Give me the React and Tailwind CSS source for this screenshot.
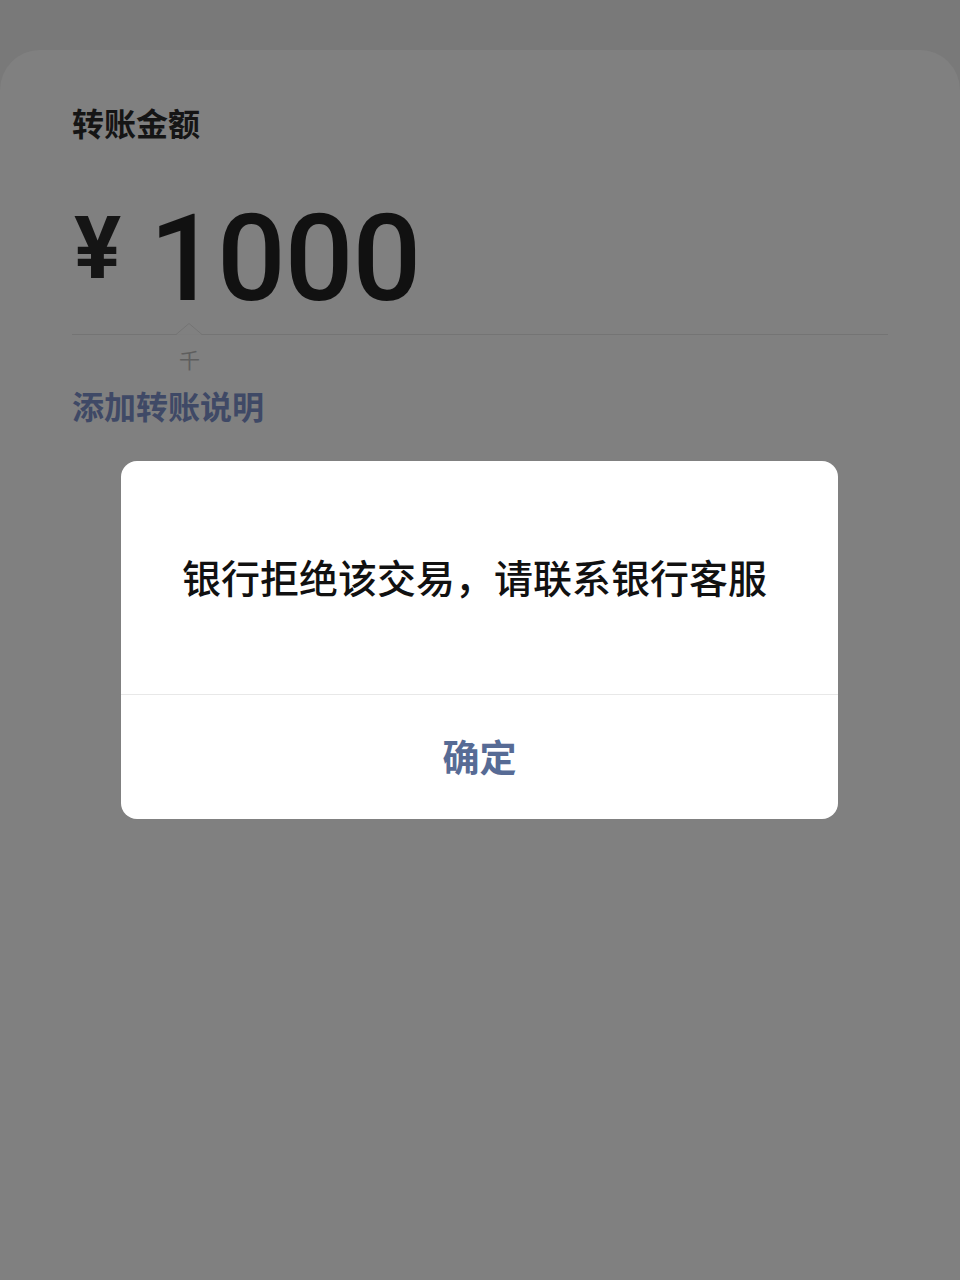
import React from "react";

export default function App() {
  return (
    <div
      className="w-[960px] h-[1280px] bg-[#797979] pt-[50px] overflow-hidden relative"
      style={{ fontFamily: '"Noto Sans CJK SC", "Noto Sans", sans-serif' }}
    >
      <div className="h-full bg-[#808080] rounded-t-[40px] px-[72px] pt-[52px]">
        <div className="text-[32px] leading-[40px] font-semibold text-[#151515]">转账金额</div>
        <div className="flex items-end mt-[66px] h-[112px]">
          <span
            className="text-[88px] leading-none font-bold text-[#151515] mb-[28px] ml-[2px]"
            style={{ fontFamily: 'Roboto, sans-serif' }}
          >
            ¥
          </span>
          <span
            className="ml-[28px] text-[121px] leading-none font-medium text-[#111] tracking-[-1px]"
            style={{ fontFamily: 'Roboto, sans-serif' }}
          >
            1000
          </span>
        </div>
        <div className="relative mt-[14px] h-px bg-[#747474] w-[816px]">
          <svg className="absolute left-[104px] -top-[11px]" width="26" height="12" viewBox="0 0 26 12">
            <path d="M0 11.5 L13 0.5 L26 11.5" fill="#808080" stroke="#747474" strokeWidth="1" />
            <path d="M1 12 L25 12" stroke="#808080" strokeWidth="1.5" />
          </svg>
        </div>
        <div className="ml-[107px] mt-[10px] text-[21px] leading-[28px] text-[#5e5e5e]">千</div>
        <div className="mt-[12px] text-[32px] leading-[40px] font-semibold text-[#3f4966]">添加转账说明</div>
      </div>

      <div className="absolute left-[121px] top-[461px] w-[717px] h-[358px] bg-white rounded-[16px] flex flex-col">
        <div className="h-[233px] flex items-center justify-center">
          <span className="text-[39px] leading-[48px] font-medium text-[#111] -mt-[4px] -ml-[10px]">
            银行拒绝该交易，请联系银行客服
          </span>
        </div>
        <div className="h-px bg-[#e8e8e8]" />
        <div className="flex-1 flex items-center justify-center">
          <span className="text-[37px] leading-[48px] font-bold text-[#576b95] -mt-[2px]">确定</span>
        </div>
      </div>
    </div>
  );
}
